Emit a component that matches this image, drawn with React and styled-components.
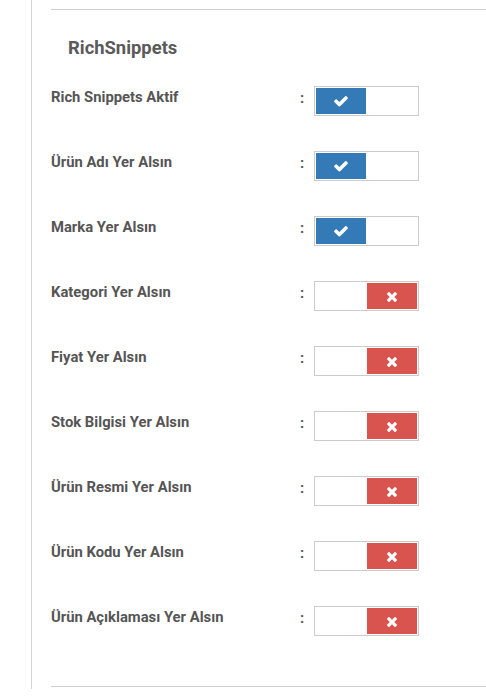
import React from "react";
import styled, { createGlobalStyle } from "styled-components";

const Global = createGlobalStyle`
  html, body { margin: 0; padding: 0; background: #fff; }
  body { font-family: Roboto, "Liberation Sans", Arial, sans-serif; color: #555; }
`;

const Page = styled.div`
  width: 486px;
  height: 698px;
  overflow: hidden;
  padding-left: 31px;
  box-sizing: border-box;
`;

const Panel = styled.div`
  border-left: 1px solid #d4d4d4;
  height: 689px;
  padding: 9px 0 0 19px;
  box-sizing: border-box;
`;

const Rule = styled.div`
  height: 1px;
  background: #cfcfcf;
  width: 100%;
`;

const Heading = styled.h3`
  margin: 0;
  padding: 27px 0 0 17px;
  height: 76px;
  box-sizing: border-box;
  font-size: 18.4px;
  line-height: 21px;
  font-weight: 700;
  color: #5a5a5a;
`;

const List = styled.div`
  display: flex;
  flex-direction: column;
  height: 600px;
`;

const Row = styled.div`
  display: flex;
  align-items: flex-start;
  height: 65px;
`;

const Label = styled.div`
  width: 249px;
  padding-top: 2px;
  font-size: 14.8px;
  line-height: 18px;
  font-weight: 700;
  color: #555;
`;

const Colon = styled.div`
  width: 14px;
  padding-top: 3px;
  font-size: 14.8px;
  line-height: 18px;
  font-weight: 700;
  color: #555;
`;

const Switch = styled.div`
  width: 105px;
  height: 30px;
  box-sizing: border-box;
  border: 1px solid #cccccc;
  padding: 1px;
  display: flex;
  justify-content: ${(p) => (p.$on ? "flex-start" : "flex-end")};
  background: #fff;
`;

const Handle = styled.div`
  width: 50px;
  height: 26px;
  background: ${(p) => (p.$on ? "#337ab7" : "#d9534f")};
  display: flex;
  align-items: center;
  justify-content: center;
  color: #fff;
`;

const CheckIcon = () => (
  <svg width="16" height="16" viewBox="0 0 1792 1792" fill="currentColor">
    <path d="M1671 566q0 40-28 68l-724 724-136 136q-28 28-68 28t-68-28l-136-136-362-362q-28-28-28-68t28-68l136-136q28-28 68-28t68 28l294 295 656-657q28-28 68-28t68 28l136 136q28 28 28 68z" />
  </svg>
);

const TimesIcon = () => (
  <svg width="12" height="15" viewBox="0 0 1408 1792" fill="currentColor">
    <path d="M1298 1322q0 40-28 68l-136 136q-28 28-68 28t-68-28l-294-294-294 294q-28 28-68 28t-68-28l-136-136q-28-28-28-68t28-68l294-294-294-294q-28-28-28-68t28-68l136-136q28-28 68-28t68 28l294 294 294-294q28-28 68-28t68 28l136 136q28 28 28 68t-28 68l-294 294 294 294q28 28 28 68z" />
  </svg>
);

const items = [
  ["Rich Snippets Aktif", true],
  ["Ürün Adı Yer Alsın", true],
  ["Marka Yer Alsın", true],
  ["Kategori Yer Alsın", false],
  ["Fiyat Yer Alsın", false],
  ["Stok Bilgisi Yer Alsın", false],
  ["Ürün Resmi Yer Alsın", false],
  ["Ürün Kodu Yer Alsın", false],
  ["Ürün Açıklaması Yer Alsın", false],
];

export default function App() {
  return (
    <>
      <Global />
      <Page>
        <Panel>
          <Rule />
          <Heading>RichSnippets</Heading>
          <List>
            {items.map(([label, on]) => (
              <Row key={label}>
                <Label>{label}</Label>
                <Colon>:</Colon>
                <Switch $on={on}>
                  <Handle $on={on}>{on ? <CheckIcon /> : <TimesIcon />}</Handle>
                </Switch>
              </Row>
            ))}
          </List>
          <Rule />
        </Panel>
      </Page>
    </>
  );
}
